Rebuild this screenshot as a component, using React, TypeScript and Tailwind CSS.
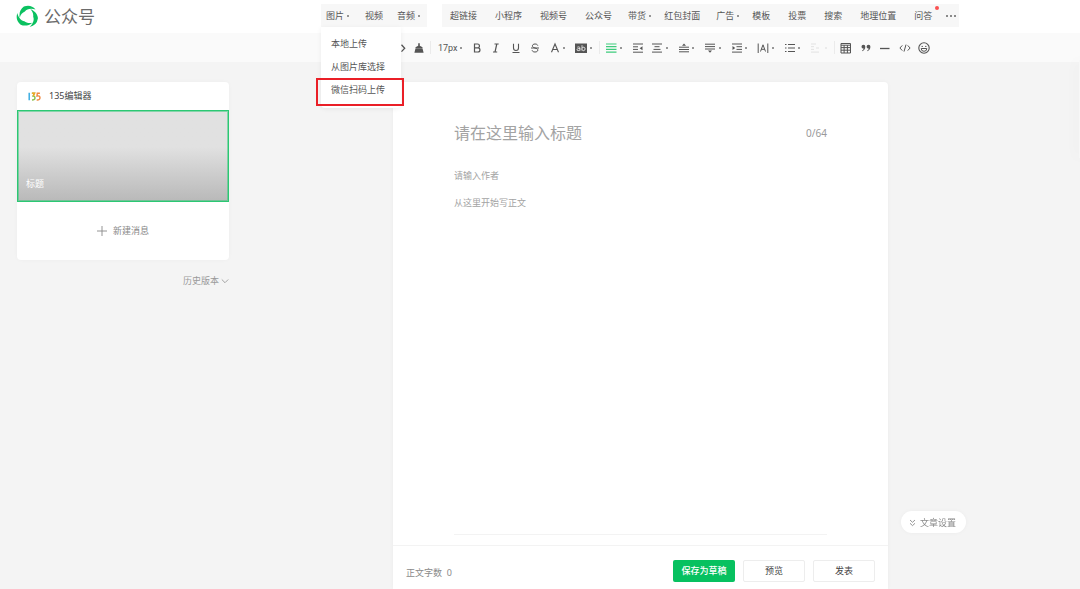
import type { ReactNode } from "react";

interface NavItem {
  label: string;
  caret?: boolean;
  badge?: boolean;
}

interface Tool {
  label: string;
  icon: ReactNode;
  caret?: boolean;
  className?: string;
}

const MEDIA: NavItem[] = [{ label: "视频" }, { label: "音频", caret: true }];

const UPLOADS = ["本地上传", "从图片库选择", "微信扫码上传"];

const INSERTS: NavItem[] = [
  { label: "超链接" },
  { label: "小程序" },
  { label: "视频号" },
  { label: "公众号" },
  { label: "带货", caret: true },
  { label: "红包封面" },
  { label: "广告", caret: true },
  { label: "模板" },
  { label: "投票" },
  { label: "搜索" },
  { label: "地理位置" },
  { label: "问答", badge: true },
];

function Glyph({ children }: { children: ReactNode }) {
  return (
    <svg viewBox="0 0 12 12" className="h-3 w-3 shrink-0" fill="none" stroke="currentColor" strokeWidth="1">
      {children}
    </svg>
  );
}

const HISTORY_TOOLS: Tool[] = [
  { label: "撤销", icon: <Glyph><path d="M4.5 2.5 1 6l3.5 3.5" /></Glyph> },
  { label: "重做", icon: <Glyph><path d="M7.5 2.8 10.7 6.2 7.5 9.6" strokeWidth="1.3" /></Glyph> },
  {
    label: "格式刷",
    icon: (
      <Glyph>
        <path d="M5.2 1.3h1.6v2.5l2.7 1.4v1.2h-7V5.2l2.7-1.4zM2.4 6.7h7.2l1 4H1.4z" fill="currentColor" stroke="none" />
      </Glyph>
    ),
  },
];

const TEXT_TOOLS: Tool[] = [
  { label: "加粗", icon: <Glyph><path d="M3.5 2h3a1.9 1.9 0 0 1 0 3.9h-3zM3.5 5.9h3.4a2 2 0 0 1 0 4.1H3.5z" strokeWidth="1.2" /></Glyph> },
  { label: "斜体", icon: <Glyph><path d="M4.5 2h4.2M3 10h4.2M6.8 2 5 10" strokeWidth="1.2" /></Glyph> },
  { label: "下划线", icon: <Glyph><path d="M3.5 1.8V6a2.5 2.5 0 0 0 5 0V1.8M2.5 10.5h7" strokeWidth="1.1" /></Glyph> },
  {
    label: "删除线",
    icon: <Glyph><path d="M8.8 3.6C8.4 2.4 7.4 2 6 2 4.5 2 3.4 2.7 3.4 3.9 3.4 5 4.4 5.5 6 6c1.8.5 2.8 1 2.8 2.2C8.8 9.4 7.6 10 6 10 4.4 10 3.4 9.5 3.1 8.3M2 6h8" /></Glyph>,
  },
  { label: "字体颜色", caret: true, icon: <Glyph><path d="M2.5 10.2 6 2l3.5 8.2M3.7 7.5h4.6" strokeWidth="1.1" /></Glyph> },
  {
    label: "背景色",
    caret: true,
    icon: (
      <Glyph>
        <path d="M0 1.5h12V11H0z" fill="currentColor" stroke="none" />
        <path d="M2.3 5.2c1.5-.7 2.7-.2 2.7 1v2.4M5 6.5C3.2 6.3 2 6.800 2 7.700 2 8.900 4 9 5 7.800M7 3.200v5.400M7 6.300c.6-1.600 3.100-1.500 3.100.6 0 2.200-2.500 2.300-3.100.7" stroke="#fafafa" strokeWidth="0.8" />
      </Glyph>
    ),
  },
];

const PARAGRAPH_TOOLS: Tool[] = [
  { label: "两端对齐", caret: true, className: "text-[#3ecb7c]", icon: <Glyph><path d="M1 2h10.5M1 4.7h10.5M1 7.4h10.5M1 10.1h10.5" strokeWidth="1.2" /></Glyph> },
  {
    label: "浮动",
    icon: (
      <Glyph>
        <path d="M1 2h10M1 10.2h10M1 4.8h5M1 7.4h5" />
        <path d="M10.5 4.2v4L7.6 6.2z" fill="currentColor" stroke="none" />
      </Glyph>
    ),
  },
  { label: "对齐", caret: true, icon: <Glyph><path d="M1 2h10M3.5 4.7h5M2.5 7.4h7M1 10.1h10" /></Glyph> },
  {
    label: "段前距",
    caret: true,
    icon: (
      <Glyph>
        <path d="M1 5.2h10M1 7.5h10M1 9.8h10" />
        <path d="M6 1.4 8 3.8H4z" fill="currentColor" stroke="none" />
      </Glyph>
    ),
  },
  {
    label: "段后距",
    caret: true,
    icon: (
      <Glyph>
        <path d="M1 2.2h10M1 4.6h10M1 7h10" />
        <path d="M6 10.8 8 8.6H4z" fill="currentColor" stroke="none" />
      </Glyph>
    ),
  },
  {
    label: "缩进",
    caret: true,
    icon: (
      <Glyph>
        <path d="M1 2h10M5.5 4.7H11M5.5 7.4H11M1 10.1h10" />
        <path d="M1.5 4v4l2.7-2z" fill="currentColor" stroke="none" />
      </Glyph>
    ),
  },
  { label: "字间距", caret: true, icon: <Glyph><path d="M1.2 1.5V11M10.8 1.5V11M3.5 9.5 6 2.8l2.5 6.7M4.3 7.3h3.4" /></Glyph> },
  { label: "列表", caret: true, icon: <Glyph><path d="M1 2.5h1.5M4 2.5h7M1 6h1.5M4 6h7M1 9.5h1.5M4 9.5h7" /></Glyph> },
  { label: "图文", caret: true, className: "text-[#e2e2e2]", icon: <Glyph><path d="M1 2h5M1 4.7h3M1 7.4h3M1 10.1h8M6 6h3" /></Glyph> },
];

const BLOCK_TOOLS: Tool[] = [
  { label: "表格", icon: <Glyph><path d="M1 1.5h9.5V11H1zM1 3.2h9.5M1 5.6h9.5M1 8.2h9.5M4.1 3.2V11M7.4 3.2V11" /></Glyph> },
  {
    label: "引用",
    icon: (
      <Glyph>
        <path d="M3.4 2.8a1.9 1.9 0 0 1 1.9 2C5.3 7 4.2 8.7 2.2 9.3L1.9 8.7C3 8.2 3.5 7.5 3.6 6.6 2.4 6.6 1.5 5.8 1.5 4.7a1.9 1.9 0 0 1 1.9-1.9zM8.5 2.8a1.9 1.9 0 0 1 1.9 2C10.4 7 9.3 8.7 7.3 9.3L7 8.7c1.1-.5 1.6-1.2 1.7-2.1-1.2 0-2.1-.8-2.1-1.9a1.9 1.9 0 0 1 1.9-1.9z" fill="currentColor" stroke="none" />
      </Glyph>
    ),
  },
  { label: "分割线", icon: <Glyph><path d="M1 6.5h9.5" strokeWidth="1.3" /></Glyph> },
  { label: "代码", icon: <Glyph><path d="M3.3 3.4.9 6l2.4 2.6M8.7 3.4 11.1 6 8.7 8.6M7 2.6 5 9.6" /></Glyph> },
  {
    label: "表情",
    icon: (
      <Glyph>
        <circle cx="6" cy="6" r="5.2" strokeWidth="1.1" />
        <path d="M3.2 6.5h5.6a2.8 2.8 0 0 1-5.6 0z" />
        <circle cx="4.2" cy="4.4" r="0.7" fill="currentColor" stroke="none" />
        <circle cx="7.8" cy="4.4" r="0.7" fill="currentColor" stroke="none" />
      </Glyph>
    ),
  },
];

function Caret() {
  return (
    <span className="flex w-[7px] shrink-0 justify-center">
      <span className="h-0.5 w-0.5 rounded-full bg-current opacity-80" />
    </span>
  );
}

function ToolButton({ tool }: { tool: Tool }) {
  const muted = tool.label === "图文";
  return (
    <button type="button" aria-label={tool.label} className={muted ? "flex items-center text-[#e2e2e2]" : "flex items-center"}>
      <span className={tool.className}>{tool.icon}</span>
      {tool.caret && <Caret />}
    </button>
  );
}

function Divider() {
  return <span className="mx-[5px] h-[13px] w-px shrink-0 bg-[#ebebeb]" />;
}

// three identical blades turned around the centre
function Logo() {
  const blade = "M3.9 13.2C2.9 8.6 4.6 4 8.2 1.6A11 11 0 0 1 20.4 4.6C15.600 3.100 11.200 4 9.300 6.700 6.800 7.600 4.700 9.900 3.900 13.200z";
  return (
    <svg viewBox="0 0 24 24" className="h-[23px] w-[23px]" fill="#0bc160">
      <path d={blade} />
      <path d={blade} transform="rotate(120 12 12)" />
      <path d={blade} transform="rotate(240 12 12)" />
    </svg>
  );
}

function ImageMenu() {
  return (
    <div className="relative">
      <button type="button" className="flex items-center" aria-expanded="true">
        图片
        <Caret />
      </button>
      <ul className="absolute -left-[5px] top-[18px] z-20 w-20 rounded-b-sm bg-white py-[6px] shadow-[0_1px_5px_rgba(0,0,0,0.06)]">
        {UPLOADS.map((label, i) => (
          <li key={label} className="relative">
            <button type="button" className="h-[23px] w-full whitespace-nowrap pl-[10px] text-left">
              {label}
            </button>
            {i === UPLOADS.length - 1 && (
              <span className="pointer-events-none absolute -bottom-1 -left-[5px] -right-[3px] -top-px border-2 border-[#ea1f27]" />
            )}
          </li>
        ))}
      </ul>
    </div>
  );
}

function Header() {
  return (
    <header className="flex h-[33px] items-center bg-white">
      <a href="#" className="flex w-[321px] shrink-0 items-center gap-[5px] pl-4 text-[17px] text-[#6b6b6b]">
        <Logo />
        公众号
      </a>
      <nav className="flex gap-[15px] whitespace-nowrap pb-[2px] text-[#555]">
        <div className="flex h-[23px] items-center gap-[14px] bg-[#f7f7f7] px-[5px]">
          <ImageMenu />
          {MEDIA.map((item) => (
            <button key={item.label} type="button" className="flex items-center">
              {item.label}
              {item.caret && <Caret />}
            </button>
          ))}
        </div>
        <div className="flex h-[23px] items-center gap-[18px] bg-[#f7f7f7] pl-2 pr-[3px]">
          {INSERTS.map((item) => (
            <button
              key={item.label}
              type="button"
              className={item.caret ? "-ml-0.5 -mr-[7px] flex items-center" : "relative"}
            >
              {item.label}
              {item.caret && <Caret />}
              {item.badge && <span className="absolute -right-[7px] -top-[3px] h-1 w-1 rounded-full bg-[#fa5151]" />}
            </button>
          ))}
          <button type="button" aria-label="更多" className="-ml-1 flex gap-[2px]">
            <span className="h-0.5 w-0.5 rounded-full bg-[#666]" />
            <span className="h-0.5 w-0.5 rounded-full bg-[#666]" />
            <span className="h-0.5 w-0.5 rounded-full bg-[#666]" />
          </button>
        </div>
      </nav>
    </header>
  );
}

function Toolbar() {
  return (
    <div className="flex h-[29px] items-center bg-[#fafafa] pl-[321px] text-[#555]">
      <div className="flex w-[104px] shrink-0 justify-end gap-[7px]">
        {HISTORY_TOOLS.map((t) => (
          <ToolButton key={t.label} tool={t} />
        ))}
      </div>
      <Divider />
      <div className="ml-[2px] flex w-[156px] shrink-0 items-center justify-between">
        <button type="button" className="flex w-[25px] items-center justify-between font-['Roboto',sans-serif]">
          17px
          <Caret />
        </button>
        {TEXT_TOOLS.map((t) => (
          <ToolButton key={t.label} tool={t} />
        ))}
      </div>
      <Divider />
      <div className="flex w-[224px] shrink-0 items-center justify-between">
        {PARAGRAPH_TOOLS.map((t) => (
          <ToolButton key={t.label} tool={t} />
        ))}
      </div>
      <Divider />
      <div className="flex w-[90px] shrink-0 items-center justify-between">
        {BLOCK_TOOLS.map((t) => (
          <ToolButton key={t.label} tool={t} />
        ))}
      </div>
    </div>
  );
}

function BrandMark() {
  return (
    <svg viewBox="0 0 13 9" className="h-[9px] w-[13px]" fill="none" strokeWidth="1.4">
      <path d="M1.2.8v7.4" stroke="#2fa8e0" />
      <path d="M3.8 1.2h2.6L5 4c1.4 0 2 .8 2 2s-1 2-3 2" stroke="#8cc152" />
      <path d="M4 1.2h2.6L5.2 4" stroke="#f5a623" />
      <path d="M11.9 1.2H9.3L9 4c2-.5 3 .4 3 1.8S11 8.2 8.7 8" stroke="#f0883e" />
    </svg>
  );
}

function MessageList() {
  return (
    <aside className="w-[212px] shrink-0">
      <div className="rounded-sm bg-white shadow-[0_0_4px_rgba(0,0,0,0.03)]">
        <div className="flex h-7 items-center gap-2 px-[11px] text-[#444]">
          <BrandMark />
          135编辑器
        </div>
        <div className="flex h-[92px] items-end border border-[#2bc873] bg-linear-to-b from-[#e1e1e1] from-40% to-[#b9b9b9] px-2 pb-[10px] text-white outline -outline-offset-2 outline-[#2bc873]/50">
          标题
        </div>
        <button type="button" className="flex h-[58px] w-full items-center justify-center gap-[6px] text-[#888]">
          <svg viewBox="0 0 10 10" className="h-[10px] w-[10px]" stroke="currentColor" strokeWidth="0.9">
            <path d="M5 0v10M0 5h10" />
          </svg>
          新建消息
        </button>
      </div>
      <button type="button" className="ml-auto mt-[14px] flex items-center gap-[2px] text-[#9a9a9a]">
        历史版本
        <svg viewBox="0 0 8 8" className="h-2 w-2" fill="none" stroke="currentColor" strokeWidth="0.9">
          <path d="M.8 2.5 4 5.7l3.2-3.2" />
        </svg>
      </button>
    </aside>
  );
}

function Editor() {
  return (
    <main className="flex max-w-[495px] flex-1 flex-col rounded-t-sm bg-white shadow-[0_0_4px_rgba(0,0,0,0.04)]">
      <div className="mx-[61px] flex flex-1 flex-col border-b border-[#f3f3f3] pt-[39px]">
        <div className="flex items-center">
          <input
            aria-label="标题"
            placeholder="请在这里输入标题"
            className="h-6 min-w-0 flex-1 text-base outline-none placeholder:text-[#a3a3a3]"
          />
          <span className="text-[10px] text-[#9a9a9a]">0/64</span>
        </div>
        <input
          aria-label="作者"
          placeholder="请输入作者"
          className="mt-6 h-[14px] outline-none placeholder:text-[#a3a3a3]"
        />
        <textarea
          aria-label="正文"
          placeholder="从这里开始写正文"
          className="mt-[13px] flex-1 resize-none leading-[14px] outline-none placeholder:text-[#a3a3a3]"
        />
      </div>
      <footer className="mt-[10px] flex h-11 items-center gap-2 border-t border-[#f3f3f3] px-[13px] pt-[6px]">
        <span className="mr-auto pt-1 text-[#8a8a8a]">正文字数&nbsp;&nbsp;0</span>
        <button type="button" className="h-[22px] w-[62px] rounded-xs bg-[#07c160] font-medium text-white">
          保存为草稿
        </button>
        <button type="button" className="h-[22px] w-[62px] rounded-xs border border-[#ededed] text-[#444]">
          预览
        </button>
        <button type="button" className="h-[22px] w-[62px] rounded-xs border border-[#ededed] text-[#444]">
          发表
        </button>
      </footer>
    </main>
  );
}

export default function App() {
  return (
    <div className="flex min-h-screen flex-col overflow-hidden bg-[#f4f4f4] font-['Noto_Sans','Noto_Sans_CJK_SC',sans-serif] text-[9px] leading-[14px]">
      <Header />
      <Toolbar />
      <div className="flex flex-1 gap-[164px] pl-[17px] pt-5">
        <MessageList />
        <Editor />
      </div>
      <button
        type="button"
        className="fixed bottom-14 right-[114px] flex h-[22px] items-center gap-1 rounded-full bg-white pl-2 pr-[10px] pt-px text-[#8a8a8a] shadow-[0_0_4px_rgba(0,0,0,0.04)]"
      >
        <svg viewBox="0 0 7 8" className="h-2 w-[7px]" fill="none" stroke="currentColor" strokeWidth="0.9">
          <path d="M1 1l2.500 2.300L6 1M1 4.300l2.500 2.300L6 4.300" />
        </svg>
        文章设置
      </button>
      <div className="fixed right-0 top-[60px] h-[98px] w-px bg-[#f7f7f7] shadow-[0_0_14px_rgba(0,0,0,0.18)]" />
    </div>
  );
}
